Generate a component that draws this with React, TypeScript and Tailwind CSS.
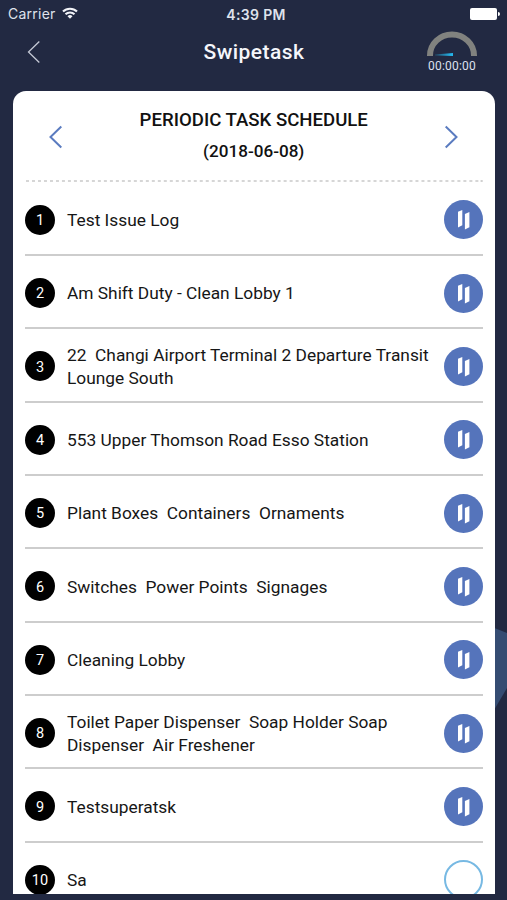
const tasks: { lines: string[]; done?: boolean }[] = [
  { lines: ['Test Issue Log'] },
  { lines: ['Am Shift Duty - Clean Lobby 1'] },
  { lines: ['22  Changi Airport Terminal 2 Departure Transit', 'Lounge South'] },
  { lines: ['553 Upper Thomson Road Esso Station'] },
  { lines: ['Plant Boxes  Containers  Ornaments'] },
  { lines: ['Switches  Power Points  Signages'] },
  { lines: ['Cleaning Lobby'] },
  { lines: ['Toilet Paper Dispenser  Soap Holder Soap', 'Dispenser  Air Freshener'] },
  { lines: ['Testsuperatsk'] },
  { lines: ['Sa'], done: true },
];

function Chevron({ flip = false, color, thin = false }: { flip?: boolean; color: string; thin?: boolean }) {
  return (
    <svg width="14" height="24" viewBox="0 0 14 24" fill="none" className={flip ? '-scale-x-100' : ''}>
      <path d="M12.3 1.5 1.5 12l10.8 10.5" stroke={color} strokeWidth={thin ? 1.3 : 2} />
    </svg>
  );
}

function StatusBar() {
  return (
    <div className="grid h-7 grid-cols-3 items-center pl-[8px] pr-[7px] font-['Inter','Liberation_Sans',sans-serif] text-[14px] text-[#dfe2ec]">
      <div className="flex items-center gap-[6px] pb-[2px]">
        <span className="tracking-[0.25px]">Carrier</span>
        <svg width="16" height="12" viewBox="0 0 16 12" fill="none" stroke="#f2f3f8" strokeWidth="2.1">
          <path d="M1 4.6a10 10 0 0 1 14 0M3.5 7.3a6.4 6.4 0 0 1 9 0" />
          <path d="M8 11.7 5.5 9.3a3.6 3.6 0 0 1 5 0z" fill="#f2f3f8" stroke="none" />
        </svg>
      </div>
      <span className="pl-[4px] text-center text-[14px] font-semibold tracking-[0.35px] whitespace-nowrap">4:39 PM</span>
      <div className="flex items-center justify-end gap-px">
        <div className="h-3 w-[27px] rounded-[2px] bg-white" />
        <div className="h-1 w-[2px] rounded-r bg-white" />
      </div>
    </div>
  );
}

function Gauge() {
  return (
    <div className="flex w-[50px] flex-col items-center">
      <svg width="50" height="26" viewBox="0 0 50 26" fill="none">
        <defs>
          <linearGradient id="needle" x1="8" x2="24" y1="0" y2="0" gradientUnits="userSpaceOnUse">
            <stop stopColor="#214764" />
            <stop offset="1" stopColor="#24b4ea" />
          </linearGradient>
        </defs>
        <path d="M3 25V24.5a22 21 0 0 1 44 0V25" stroke="#81827f" strokeWidth="6" />
        <path d="M8 24.5v-1l18-1.5v3z" fill="url(#needle)" />
      </svg>
      <span className="text-[12px] leading-[18px] tracking-[0.2px] text-[#dde0ef]">00:00:00</span>
    </div>
  );
}

function TaskButton({ done }: { done?: boolean }) {
  if (done) return <div className="size-[39px] shrink-0 rounded-full border-[2px] border-[#77b9e3]" />;
  return (
    <svg width="39" height="39" viewBox="0 0 39 39" className="shrink-0">
      <circle cx="19.5" cy="19.5" r="19.5" fill="#5574bb" />
      <path d="M14 11.8 18.3 9.9V25.2L14 27.4zM20.9 14 25.4 11.9V27.3L20.9 29.6z" fill="#fff" />
    </svg>
  );
}

export default function App() {
  return (
    <div className="relative isolate flex h-[900px] w-[507px] flex-col overflow-hidden bg-[#222942] font-['Roboto','Liberation_Sans',sans-serif]">
      <svg className="absolute top-[600px] right-0 -z-10" width="20" height="130" viewBox="0 0 20 130">
        <path d="M0 25 20 33V88L0 122z" fill="#354c72" />
      </svg>
      <StatusBar />
      <header className="flex h-[63px] items-start justify-between pr-[30px] pl-[27px]">
        <div className="flex w-[50px] pt-[12px]">
          <Chevron color="#c5c9d5" thin />
        </div>
        <h1 className="pt-[10px] pl-[4px] text-[21px] leading-7 font-medium tracking-[0.45px] text-[#f5f6fb]">Swipetask</h1>
        <div className="pt-[3px]">
          <Gauge />
        </div>
      </header>
      <main className="mr-[12px] ml-[13px] flex h-[803px] flex-col overflow-hidden rounded-t-[13px] bg-white pr-[12.5px] pl-[12px]">
        <div className="flex h-[89px] shrink-0 items-center justify-between px-[24px]">
          <div className="pt-[3px]">
            <Chevron color="#5b7cc0" />
          </div>
          <div className="pt-px text-center font-medium text-[#111]">
            <div className="text-[18.6px] leading-[31px]">PERIODIC TASK SCHEDULE</div>
            <div className="text-[17.1px] leading-[31px]">(2018-06-08)</div>
          </div>
          <div className="pt-[3px]">
            <Chevron color="#5b7cc0" flip />
          </div>
        </div>
        <svg className="h-[2px] w-full shrink-0" viewBox="0 0 457 2" preserveAspectRatio="none">
          <path d="M1 1H457" stroke="#c9c9c9" strokeWidth="1.6" strokeDasharray="3 2.985" />
          <path d="M455 1H457" stroke="#c9c9c9" strokeWidth="1.6" />
        </svg>
        <ul className="shrink-0 pt-[0.6px]">
          {tasks.map((task, i) => (
            <li key={i} className="flex h-[73.33px] items-center border-b-2 border-[#cdcdcd] pt-[3px]">
              <div className="flex size-[30px] shrink-0 items-center justify-center rounded-full bg-black pt-[2px] text-[14.5px] text-white">
                {i + 1}
              </div>
              <div className="ml-[12px] flex-1 pt-px text-[17.33px] leading-[22.5px] whitespace-pre text-[#161616]">
                {task.lines.map((line) => (
                  <div key={line}>
                    <span>{line}</span>
                  </div>
                ))}
              </div>
              <TaskButton done={task.done} />
            </li>
          ))}
        </ul>
      </main>
    </div>
  );
}
